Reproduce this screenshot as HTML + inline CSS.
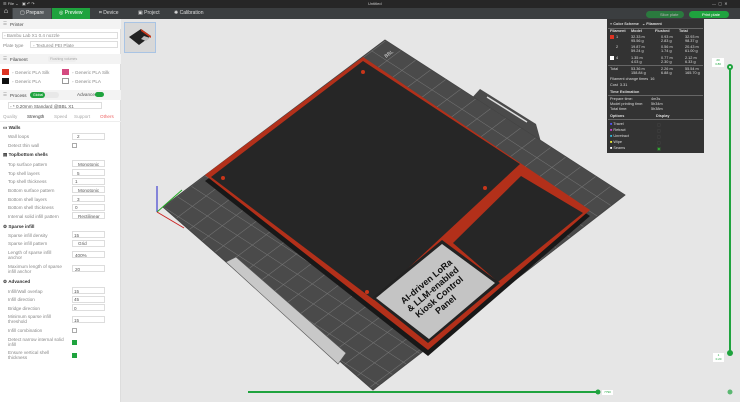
<!DOCTYPE html>
<html><head><meta charset="utf-8"><style>
*{margin:0;padding:0;box-sizing:border-box}
body{width:740px;height:402px;overflow:hidden;background:#e6e6e6;font-family:"Liberation Sans",sans-serif;position:relative;font-size:4.6px;color:#555}
.a{position:absolute;white-space:nowrap}
.top{left:0;top:0;width:740px;height:8px;background:#262626}
.tabs{left:0;top:8px;width:740px;height:11px;background:#3b3e40;color:#ddd;font-size:5px}
.lp{left:0;top:19px;width:121px;height:383px;background:#fff;border-right:1px solid #ddd}
.hd{left:0;width:121px;height:10px;background:#f3f3f3;color:#444;padding:2.5px 0 0 10px}
.in{border:1px solid #ddd;height:7px;background:#fff}
.lbl{left:8px;color:#888}
.sec{left:3px;color:#333;font-weight:bold}
.cb{width:5px;height:5px;border:1px solid #aaa;background:#fff}
.cg{width:5px;height:5px;background:#1fa33e}
.leg{left:607px;top:19px;width:97px;height:134px;background:#333;color:#ddd;font-size:3.8px}
.leg .a{color:#ddd}
</style></head><body>
<div class="a top"></div>
<div class="a" style="left:3px;top:1px;color:#ccc;font-size:4px">☰ File ⌄ &nbsp; ▣ ↶ ↷</div>
<div class="a" style="left:368px;top:1px;color:#ccc;font-size:4px">Untitled</div>
<div class="a" style="left:712px;top:1px;color:#ccc;font-size:4px">—&nbsp; ▢ &nbsp;✕</div>
<div class="a tabs"></div>
<div class="a" style="left:0;top:8px;width:12px;height:11px;background:#2a2a2a;color:#fff;font-size:7px;text-align:center">⌂</div>
<div class="a" style="left:13px;top:8px;width:38px;height:11px;background:#55595c"></div>
<div class="a" style="left:20px;top:10px;color:#eee;font-size:5px">▢ Prepare</div>
<div class="a" style="left:52px;top:8px;width:38px;height:11px;background:#1fa33e"></div>
<div class="a" style="left:59px;top:10px;color:#fff;font-size:5px">◎ Preview</div>
<div class="a" style="left:99px;top:10px;color:#ddd;font-size:5px">⌗ Device</div>
<div class="a" style="left:138px;top:10px;color:#ddd;font-size:5px">▣ Project</div>
<div class="a" style="left:174px;top:10px;color:#ddd;font-size:5px">✺ Calibration</div>

<div class="a lp"></div>
<div class="a hd" style="top:19px">Printer</div>
<div class="a" style="left:3px;top:21px;color:#888">☰</div>
<div class="a in" style="left:2px;top:32px;width:116px"></div>
<div class="a lbl" style="left:4px;top:33px">◦ Bambu Lab X1 0.4 nozzle</div>
<div class="a lbl" style="left:3px;top:43px">Plate type</div>
<div class="a in" style="left:30px;top:41px;width:88px"></div>
<div class="a lbl" style="left:33px;top:43px">◦ Textured PEI Plate</div>
<div class="a hd" style="top:54px">Filament</div>
<div class="a" style="left:3px;top:56px;color:#888">☰</div>
<div class="a" style="left:48px;top:56px;width:28px;height:6px;background:#eee;border-radius:2px;color:#aaa;font-size:3.5px;padding:1px 2px">Flushing volumes</div>
<div class="a" style="left:2px;top:69px;width:7px;height:6px;background:#d32"></div>
<div class="a" style="left:62px;top:69px;width:7px;height:6px;background:#d44a80"></div>
<div class="a" style="left:2px;top:78px;width:7px;height:6px;background:#111"></div>
<div class="a" style="left:62px;top:78px;width:7px;height:6px;border:1px solid #999"></div>
<div class="a lbl" style="left:12px;top:70px">◦ Generic PLA Silk</div>
<div class="a lbl" style="left:72px;top:70px">◦ Generic PLA Silk</div>
<div class="a lbl" style="left:12px;top:79px">◦ Generic PLA</div>
<div class="a lbl" style="left:72px;top:79px">◦ Generic PLA</div>
<div class="a hd" style="top:90px">Process</div>
<div class="a" style="left:3px;top:92px;color:#888">☰</div>
<div class="a" style="left:30px;top:92px;width:29px;height:6px;background:#e8e8e8;border-radius:3px"></div>
<div class="a" style="left:30px;top:92px;width:15px;height:6px;background:#1fa33e;border-radius:3px;color:#fff;font-size:3.5px;padding:1px 3px">Global</div>
<div class="a" style="left:77px;top:92px;color:#555">Advanced</div>
<div class="a" style="left:95px;top:92px;width:9px;height:5px;background:#1fa33e;border-radius:3px"></div>
<div class="a in" style="left:8px;top:102px;width:94px"></div>
<div class="a lbl" style="left:10px;top:104px;color:#555">◦ * 0.20mm Standard @BBL X1</div>
<div class="a" style="left:3px;top:114px;color:#aaa">Quality</div>
<div class="a" style="left:27px;top:114px;color:#333">Strength</div>
<div class="a" style="left:54px;top:114px;color:#aaa">Speed</div>
<div class="a" style="left:74px;top:114px;color:#aaa">Support</div>
<div class="a" style="left:100px;top:114px;color:#e66">Others</div>
<div class="a" style="left:0;top:121px;width:121px;height:1px;background:#eee"></div>

<div class="a sec" style="top:125px">▭ Walls</div>
<div class="a lbl" style="top:134px">Wall loops</div><div class="a in" style="left:72px;top:133px;width:33px"></div><div class="a" style="left:77px;top:134px">2</div>
<div class="a lbl" style="top:143px">Detect thin wall</div><div class="a cb" style="left:72px;top:143px"></div>
<div class="a sec" style="top:152px">▤ Top/bottom shells</div>
<div class="a lbl" style="top:162px">Top surface pattern</div><div class="a in" style="left:72px;top:160px;width:33px"></div><div class="a" style="left:78px;top:162px">Monotonic</div>
<div class="a lbl" style="top:171px">Top shell layers</div><div class="a in" style="left:72px;top:169px;width:33px"></div><div class="a" style="left:77px;top:171px">5</div>
<div class="a lbl" style="top:179px">Top shell thickness</div><div class="a in" style="left:72px;top:178px;width:33px"></div><div class="a" style="left:75px;top:179px">1</div>
<div class="a lbl" style="top:188px">Bottom surface pattern</div><div class="a in" style="left:72px;top:186px;width:33px"></div><div class="a" style="left:78px;top:188px">Monotonic</div>
<div class="a lbl" style="top:197px">Bottom shell layers</div><div class="a in" style="left:72px;top:195px;width:33px"></div><div class="a" style="left:77px;top:197px">3</div>
<div class="a lbl" style="top:205px">Bottom shell thickness</div><div class="a in" style="left:72px;top:204px;width:33px"></div><div class="a" style="left:75px;top:205px">0</div>
<div class="a lbl" style="top:214px">Internal solid infill pattern</div><div class="a in" style="left:72px;top:212px;width:33px"></div><div class="a" style="left:78px;top:214px">Rectilinear</div>
<div class="a sec" style="top:224px">⚙ Sparse infill</div>
<div class="a lbl" style="top:233px">Sparse infill density</div><div class="a in" style="left:72px;top:231px;width:33px"></div><div class="a" style="left:74px;top:233px">15</div>
<div class="a lbl" style="top:241px">Sparse infill pattern</div><div class="a in" style="left:72px;top:240px;width:33px"></div><div class="a" style="left:78px;top:241px">Grid</div>
<div class="a lbl" style="top:250px;line-height:5px">Length of sparse infill<br>anchor</div><div class="a in" style="left:72px;top:251px;width:33px"></div><div class="a" style="left:75px;top:253px">400%</div>
<div class="a lbl" style="top:264px;line-height:5px">Maximum length of sparse<br>infill anchor</div><div class="a in" style="left:72px;top:265px;width:33px"></div><div class="a" style="left:75px;top:267px">20</div>
<div class="a sec" style="top:279px">⚙ Advanced</div>
<div class="a lbl" style="top:289px">Infill/Wall overlap</div><div class="a in" style="left:72px;top:287px;width:33px"></div><div class="a" style="left:74px;top:289px">15</div>
<div class="a lbl" style="top:297px">Infill direction</div><div class="a in" style="left:72px;top:296px;width:33px"></div><div class="a" style="left:74px;top:297px">45</div>
<div class="a lbl" style="top:306px">Bridge direction</div><div class="a in" style="left:72px;top:304px;width:33px"></div><div class="a" style="left:74px;top:306px">0</div>
<div class="a lbl" style="top:314px;line-height:5px">Minimum sparse infill<br>threshold</div><div class="a in" style="left:72px;top:316px;width:33px"></div><div class="a" style="left:74px;top:318px">15</div>
<div class="a lbl" style="top:328px">Infill combination</div><div class="a cb" style="left:72px;top:328px"></div>
<div class="a lbl" style="top:337px;line-height:5px">Detect narrow internal solid<br>infill</div><div class="a cg" style="left:72px;top:340px"></div>
<div class="a lbl" style="top:350px;line-height:5px">Ensure vertical shell<br>thickness</div><div class="a cg" style="left:72px;top:353px"></div>

<div class="a" style="left:124px;top:22px;width:32px;height:31px;background:#d8d8d8;border:1px solid #a9c4e4"></div>
<svg class="a" style="left:126px;top:26px" width="28" height="22" viewBox="0 0 28 22"><polygon points="3,11 15,3 25,10 13,19" fill="#222"/><polygon points="15,3 25,10 25,12 15,5" fill="#c8361a"/><polygon points="18,10 24,12 20,15 15,13" fill="#bbb"/></svg>

<svg class="a" style="left:0;top:0" width="740" height="402" viewBox="0 0 740 402">
<defs>
<pattern id="g" width="10" height="10" patternUnits="userSpaceOnUse" patternTransform="matrix(1.5,0.97,1.39,-1.04,163,207)">
<rect width="10" height="10" fill="#4a4a4a"/><path d="M0 0H10M0 0V10" stroke="#777" stroke-width="0.6" fill="none"/></pattern>
</defs>
<polygon points="470,100 480,89 536,124 541,142" fill="#4a4a4a"/>
<line x1="487" y1="97" x2="527" y2="122" stroke="#ddd" stroke-width="1.5"/>
<polygon points="163,207 385,40 625,195 373,390" fill="url(#g)" stroke="#444" stroke-width="1" stroke-linejoin="round"/>
<polygon points="226,262 236,257 346,353 338,364" fill="#c8c8c8" stroke="#555" stroke-width="0.6"/>
<polygon points="205,175 363,57 590,210 428,350" fill="#181818" transform="translate(0,6)"/>
<polygon points="205,175 363,57 590,210 428,350" fill="#b3301a"/>
<polygon points="211,177 363,61 520,164 374,300" fill="#262626"/>
<polygon points="453,243 521,176 583,213 498,282" fill="#262626"/>
<polygon points="372,298 442,240 500,283 428,343" fill="#222"/>
<polygon points="376,298 442,244 495,283 429,339" fill="#c4c4c4"/>
<g font-family="Liberation Sans" font-weight="bold" font-size="9" fill="#111" text-anchor="middle" transform="translate(436,293) rotate(-40)">
<text x="0" y="-12">AI-driven LoRa</text><text x="0" y="-2">&amp; LLM-enabled</text><text x="0" y="8">Kiosk Control</text><text x="0" y="18">Panel</text></g>
<circle cx="363" cy="72" r="2" fill="#c8361a"/><circle cx="223" cy="178" r="2" fill="#c8361a"/><circle cx="485" cy="188" r="2" fill="#c8361a"/><circle cx="367" cy="292" r="2" fill="#c8361a"/>
<text x="386" y="58" font-size="5" fill="#ddd" transform="rotate(-37 386 58)">BBL</text>
<line x1="157" y1="212" x2="157" y2="186" stroke="#22c" stroke-width="1"/>
<line x1="157" y1="212" x2="182" y2="190" stroke="#2a2" stroke-width="1"/>
<line x1="157" y1="212" x2="184" y2="228" stroke="#c22" stroke-width="1"/>
<line x1="248" y1="392" x2="598" y2="392" stroke="#1fa33e" stroke-width="2"/>
<circle cx="598" cy="392" r="2.5" fill="#1fa33e"/>
<line x1="730" y1="67" x2="730" y2="353" stroke="#1fa33e" stroke-width="2"/>
<circle cx="730" cy="67" r="3" fill="#1fa33e"/><circle cx="730" cy="67" r="1" fill="#fff"/>
<circle cx="730" cy="353" r="3" fill="#1fa33e"/>
<circle cx="730" cy="392" r="2.5" fill="#1fa33e" opacity=".7"/>
</svg>
<div class="a" style="left:712px;top:58px;width:12px;height:9px;background:#fff;color:#1fa33e;font-size:3px;text-align:center;line-height:4px">20<br>3.80</div>
<div class="a" style="left:713px;top:353px;width:11px;height:9px;background:#fff;color:#1fa33e;font-size:3px;text-align:center;line-height:4px">1<br>0.20</div>
<div class="a" style="left:602px;top:390px;width:11px;height:5px;background:#fff;color:#1fa33e;font-size:3px;text-align:center">7790</div>

<div class="a" style="left:646px;top:11px;width:38px;height:7px;background:#1fa33e;border-radius:4px;opacity:.6;color:#fff;font-size:4px;padding:1px 0 0 14px">Slice plate</div>
<div class="a" style="left:689px;top:11px;width:40px;height:7px;background:#1fa33e;border-radius:4px;color:#fff;font-size:4px;padding:1px 0 0 13px">Print plate</div>

<div class="a leg"></div>
<div class="a leg" style="background:none">
<div class="a" style="left:3px;top:2px;font-weight:bold">≡ Color Scheme &nbsp; ⌄ Filament</div>
<div class="a" style="left:1px;top:9px;width:95px;height:1px;background:#666"></div>
<div class="a" style="left:3px;top:10px;font-weight:bold">Filament</div><div class="a" style="left:24px;top:10px;font-weight:bold">Model</div><div class="a" style="left:48px;top:10px;font-weight:bold">Flushed</div><div class="a" style="left:72px;top:10px;font-weight:bold">Total</div>
<div class="a" style="left:3px;top:16px;width:4px;height:4px;background:#d32"></div><div class="a" style="left:9px;top:16px">1</div>
<div class="a" style="left:24px;top:16px;line-height:4.3px">32.33 m<br>95.56 g</div><div class="a" style="left:54px;top:16px;line-height:4.3px">0.93 m<br>2.83 g</div><div class="a" style="left:78px;top:16px;line-height:4.3px">32.93 m<br>98.37 g</div>
<div class="a" style="left:9px;top:26px">2</div>
<div class="a" style="left:24px;top:26px;line-height:4.3px">19.87 m<br>59.24 g</div><div class="a" style="left:54px;top:26px;line-height:4.3px">0.56 m<br>1.74 g</div><div class="a" style="left:78px;top:26px;line-height:4.3px">20.43 m<br>61.00 g</div>
<div class="a" style="left:3px;top:37px;width:4px;height:4px;background:#fff"></div><div class="a" style="left:9px;top:37px">4</div>
<div class="a" style="left:24px;top:37px;line-height:4.3px">1.35 m<br>4.03 g</div><div class="a" style="left:54px;top:37px;line-height:4.3px">0.77 m<br>2.30 g</div><div class="a" style="left:78px;top:37px;line-height:4.3px">2.12 m<br>6.33 g</div>
<div class="a" style="left:1px;top:46px;width:95px;height:1px;background:#666"></div>
<div class="a" style="left:3px;top:48px">Total</div>
<div class="a" style="left:24px;top:48px;line-height:4.3px">53.36 m<br>158.84 g</div><div class="a" style="left:54px;top:48px;line-height:4.3px">2.26 m<br>6.88 g</div><div class="a" style="left:78px;top:48px;line-height:4.3px">55.54 m<br>165.70 g</div>
<div class="a" style="left:3px;top:58px">Filament change times &nbsp;16</div>
<div class="a" style="left:3px;top:64px">Cost &nbsp;3.31</div>
<div class="a" style="left:3px;top:71px;font-weight:bold">Time Estimation</div>
<div class="a" style="left:1px;top:76px;width:95px;height:1px;background:#666"></div>
<div class="a" style="left:3px;top:78px;line-height:5.2px">Prepare time:<br>Model printing time:<br>Total time:</div>
<div class="a" style="left:44px;top:78px;line-height:5.2px">4m3s<br>5h34m<br>5h38m</div>
<div class="a" style="left:3px;top:95px;font-weight:bold">Options</div><div class="a" style="left:49px;top:95px;font-weight:bold">Display</div>
<div class="a" style="left:1px;top:100px;width:95px;height:1px;background:#666"></div>
<div class="a" style="left:3px;top:102px;line-height:6px"><span style="color:#55f">■</span> Travel<br><span style="color:#c4c">■</span> Retract<br><span style="color:#3bd">■</span> Unretract<br><span style="color:#ee3">■</span> Wipe<br><span style="color:#fff">■</span> Seams</div>
<div class="a" style="left:50px;top:103px;line-height:6px;color:#555">▢<br>▢<br>▢<br>▢<br><span style="color:#3a3">▣</span></div>
</div>
</body></html>
